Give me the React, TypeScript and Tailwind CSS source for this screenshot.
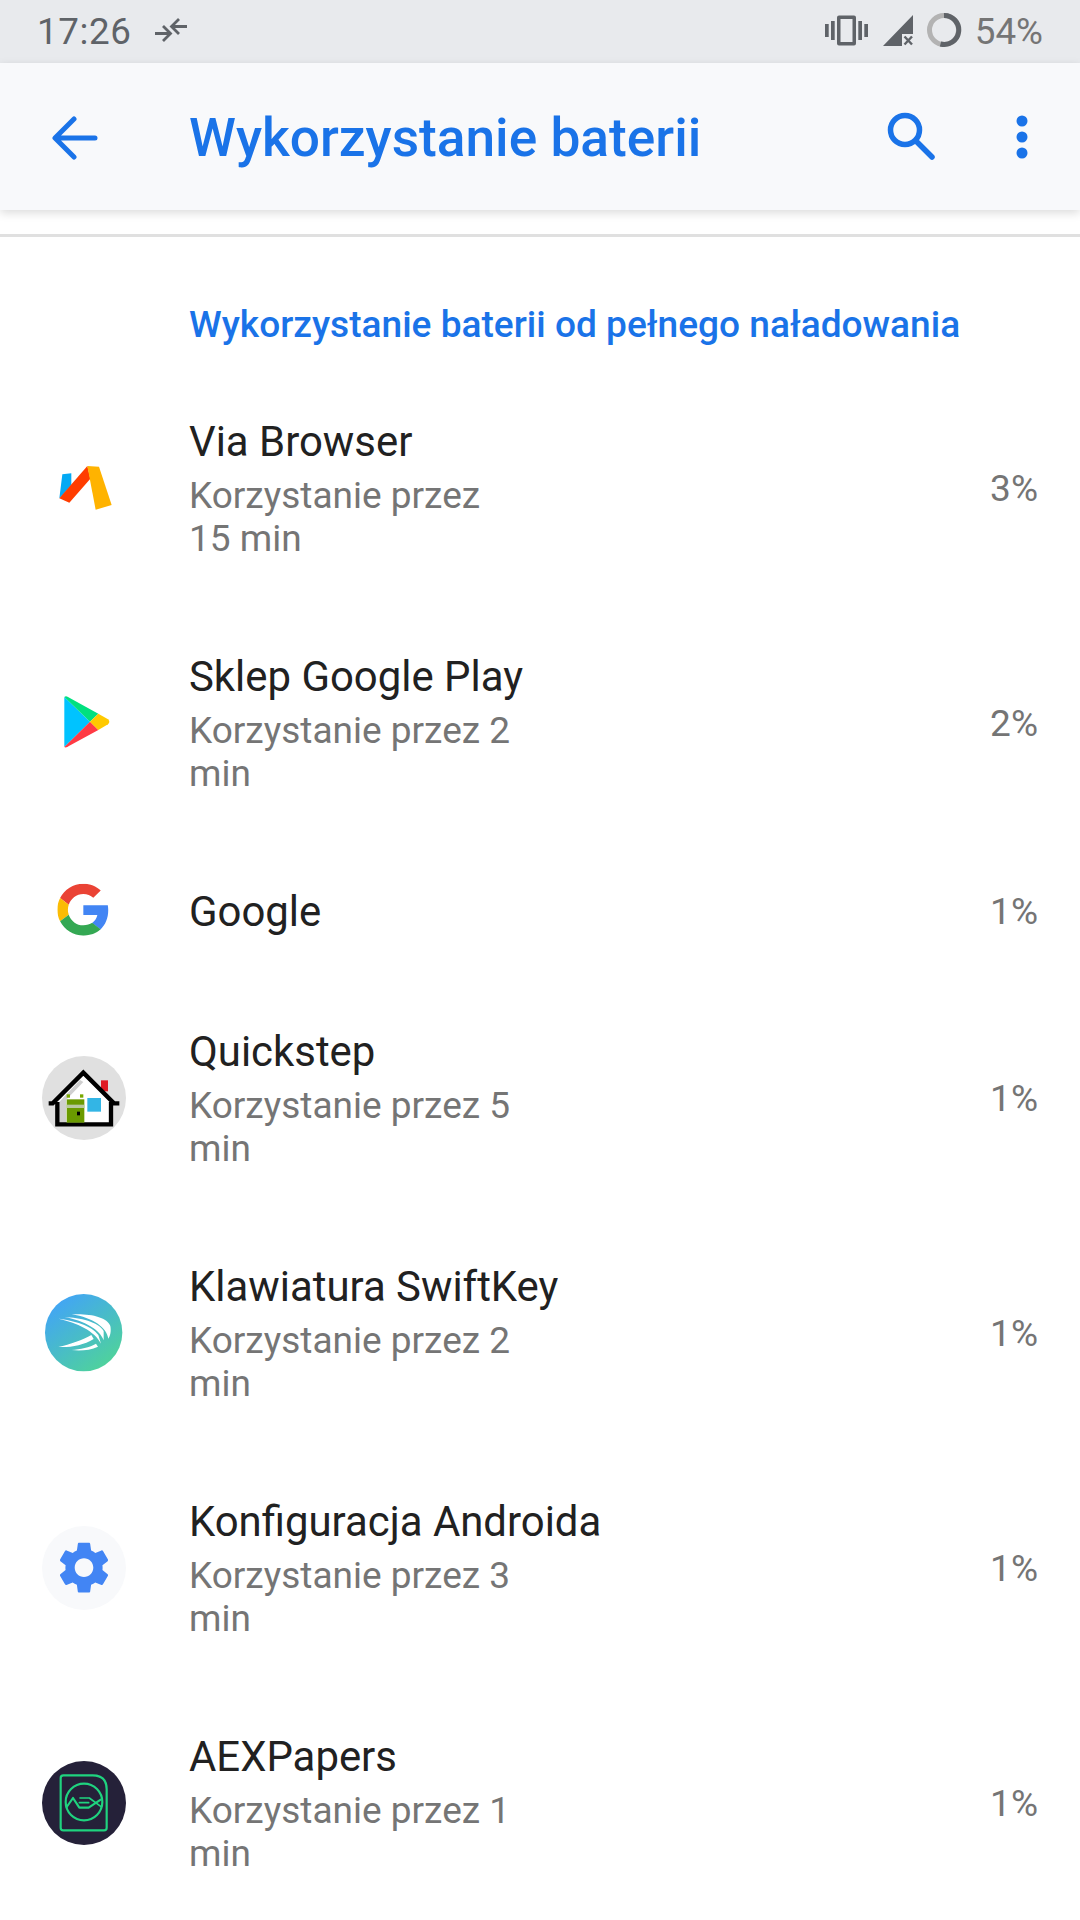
const ROWS = [
  { name: "Via Browser", sub: "Korzystanie przez 15 min", pct: "3%", icon: "via" },
  { name: "Sklep Google Play", sub: "Korzystanie przez 2 min", pct: "2%", icon: "play" },
  { name: "Google", sub: "", pct: "1%", icon: "google" },
  { name: "Quickstep", sub: "Korzystanie przez 5 min", pct: "1%", icon: "house" },
  { name: "Klawiatura SwiftKey", sub: "Korzystanie przez 2 min", pct: "1%", icon: "swift" },
  { name: "Konfiguracja Androida", sub: "Korzystanie przez 3 min", pct: "1%", icon: "gear" },
  { name: "AEXPapers", sub: "Korzystanie przez 1 min", pct: "1%", icon: "aex" },
];

// coordinates below are 3 units per screen pixel
function AppIcon({ icon }: { icon: string }) {
  if (icon === "via") {
    return (
      <svg viewBox="36 15 252 252" className="w-[84px] h-[84px]">
        <path d="M97 100 L124 97 L124 132 L100 160 L88 172 Z" fill="#03a9f4" />
        <path d="M172 75 L181 113 L118 185 L88 172 Z" fill="#ff3d00" />
        <path d="M172 75 L207 77 L245 192 L197 206 Z" fill="#ffb300" />
      </svg>
    );
  }
  if (icon === "play") {
    return (
      <svg viewBox="36 30 252 252" className="w-[84px] h-[84px]">
        <path d="M103 78 L180 152 L103 228 Z" fill="#00c3ff" />
        <path d="M103 78 Q108 72 118 80 L205 128 L180 152 Z" fill="#00e07f" />
        <path d="M103 228 Q108 232 118 224 L205 177 L180 152 Z" fill="#ff3a44" />
        <path d="M205 128 L234 145 Q242 152 234 160 L205 177 L180 152 Z" fill="#ffc900" />
      </svg>
    );
  }
  if (icon === "google") {
    return (
      <svg viewBox="36 22 252 252" className="w-[84px] h-[84px]">
        <svg x="82" y="69" width="156" height="156" viewBox="0 0 48 48">
          <path fill="#EA4335" d="M24 9.5c3.54 0 6.71 1.22 9.21 3.6l6.85-6.85C35.9 2.38 30.47 0 24 0 14.62 0 6.51 5.38 2.56 13.22l7.98 6.19C12.43 13.72 17.74 9.5 24 9.5z" />
          <path fill="#4285F4" d="M46.98 24.55c0-1.57-.15-3.09-.38-4.55H24v9.02h12.94c-.58 2.96-2.26 5.48-4.78 7.18l7.73 6c4.51-4.18 7.09-10.36 7.09-17.65z" />
          <path fill="#FBBC05" d="M10.53 28.59c-.5-1.45-.78-2.99-.78-4.59s.27-3.14.78-4.59l-7.98-6.19C.92 16.46 0 20.12 0 24c0 3.88.92 7.54 2.56 10.78l7.97-6.19z" />
          <path fill="#34A853" d="M24 48c6.48 0 11.93-2.13 15.89-5.81l-7.73-6c-2.15 1.45-4.92 2.3-8.16 2.3-6.26 0-11.57-4.22-13.47-9.91l-7.98 6.19C6.51 42.62 14.62 48 24 48z" />
        </svg>
      </svg>
    );
  }
  if (icon === "house") {
    return (
      <svg viewBox="36 30 252 252" className="w-[84px] h-[84px]">
        <circle cx="162" cy="156" r="126" fill="#e0e0e0" />
        <path d="M80 172 L160 82 L243 172 V236 H80 Z" fill="#fff" />
        <path d="M84 172 L150 102 L160 108 L108 162 V232 H84 Z" fill="#cfcfcf" />
        <rect x="213" y="103" width="21" height="33" fill="#e01b24" />
        <path d="M56 172 H68 L160 80 L252 172 H268 M82 168 V235 H243 V168" fill="none" stroke="#000" strokeWidth="13" />
        <rect x="172" y="156" width="41" height="41" fill="#33b5e5" />
        <rect x="110" y="145" width="10" height="10" fill="#78a800" />
        <rect x="150" y="145" width="10" height="10" fill="#78a800" />
        <rect x="110" y="160" width="53" height="70" fill="#6a9a00" />
        <rect x="110" y="176" width="53" height="10" fill="#b8c8a0" />
        <rect x="141" y="197" width="9" height="11" fill="#000" />
      </svg>
    );
  }
  if (icon === "swift") {
    return (
      <svg viewBox="36 30 252 252" className="w-[84px] h-[84px]">
        <defs>
          <linearGradient id="swiftGrad" x1="0.15" y1="0.1" x2="0.8" y2="0.95">
            <stop offset="0" stopColor="#42a5f5" />
            <stop offset="1" stopColor="#4fd39a" />
          </linearGradient>
        </defs>
        <circle cx="161" cy="155" r="116" fill="url(#swiftGrad)" />
        <path d="M125 100 C180 97 232 108 241 135 C244 150 241 165 235 173 C230 140 190 110 125 100 Z" fill="#fff" />
        <path d="M104 108 C150 110 205 122 221 150 L221 178 C210 146 165 120 104 108 Z" fill="#fff" />
        <path d="M85 113 C130 118 186 134 205 162 L213 188 C195 150 140 125 85 113 Z" fill="#fff" />
        <path d="M85 198 C120 190 160 177 184 162 L191 174 C160 193 120 200 85 198 Z" fill="#fff" />
        <path d="M125 207 C150 205 180 199 198 188 L204 197 C180 208 150 210 125 207 Z" fill="#fff" />
      </svg>
    );
  }
  if (icon === "gear") {
    return (
      <svg viewBox="36 30 252 252" className="w-[84px] h-[84px]">
        <circle cx="162" cy="156" r="126" fill="#f8f9fb" />
        <svg x="69" y="62" width="186" height="186" viewBox="0 0 24 24">
          <path
            fill="#4285f4"
            fillRule="evenodd"
            d="M19.14 12.94c.04-.3.06-.61.06-.94 0-.32-.02-.64-.07-.94l2.03-1.58c.18-.14.23-.41.12-.61l-1.92-3.32c-.12-.22-.37-.29-.59-.22l-2.39.96c-.5-.38-1.03-.7-1.62-.94l-.36-2.54c-.04-.24-.24-.41-.48-.41h-3.84c-.24 0-.43.17-.47.41l-.36 2.54c-.59.24-1.13.57-1.62.94l-2.39-.96c-.22-.08-.47 0-.59.22L2.74 8.87c-.12.21-.08.47.12.61l2.03 1.58c-.05.3-.09.63-.09.94s.02.64.07.94l-2.03 1.58c-.18.14-.23.41-.12.61l1.92 3.32c.12.22.37.29.59.22l2.39-.96c.5.38 1.03.7 1.62.94l.36 2.54c.05.24.24.41.48.41h3.84c.24 0 .44-.17.47-.41l.36-2.54c.59-.24 1.13-.56 1.62-.94l2.39.96c.22.08.47 0 .59-.22l1.92-3.32c.12-.22.07-.47-.12-.61l-2.01-1.58zM12 15.6c-1.98 0-3.6-1.62-3.6-3.6s1.62-3.6 3.6-3.6 3.6 1.62 3.6 3.6-1.62 3.6-3.6 3.6z"
          />
        </svg>
      </svg>
    );
  }
  return (
    <svg viewBox="36 30 252 252" className="w-[84px] h-[84px]">
      <circle cx="162" cy="156" r="126" fill="#252139" />
      <g fill="none" stroke="#1fd37f" strokeWidth="6.5" strokeLinejoin="round" strokeLinecap="round">
        <path d="M100 73 H188 Q230 73 230 115 V230 Q230 238 222 238 H100 Q92 238 92 230 V81 Q92 73 100 73 Z" />
        <circle cx="162" cy="153" r="55" />
        <path d="M110 168 L129 141 L148 170 H176 L212 146" />
        <path d="M148 155 H176 M150 141 H178 L212 166" strokeWidth="5" />
      </g>
    </svg>
  );
}

export default function App() {
  return (
    <div className="w-[1080px] h-[1920px] bg-white overflow-hidden font-['Roboto',sans-serif]">
      {/* Status bar */}
      <div className="h-[63px] bg-[#e8eaed] flex items-center pl-[37px] pr-[37px]">
        <span className="text-[36.75px] leading-[63px] text-[#5f6368] tracking-[0.6px]">17:26</span>
        <svg viewBox="0 0 34 27" className="w-[34px] h-[27px] ml-[22px] mt-[-3px]" fill="none" stroke="#5f6368" strokeWidth="2.8">
          <path d="M1 16.5 H16 M9 9 L16.5 16.5 L9 24" />
          <path d="M33 9.5 H18 M25 2 L17.5 9.5 L25 17" />
        </svg>
        <div className="ml-auto flex items-center">
          <svg viewBox="0 0 43 31" className="w-[43px] h-[31px] mt-[-2px]" fill="#5f6368">
            <rect x="0" y="9" width="3.7" height="13" />
            <rect x="6" y="6" width="3.7" height="19" />
            <path fillRule="evenodd" d="M14 0.5 H29 Q31 0.5 31 2.5 V28.5 Q31 30.5 29 30.5 H14 Q12 30.5 12 28.5 V2.5 Q12 0.5 14 0.5 Z M15.5 4 V27 H27.5 V4 Z" />
            <rect x="33.3" y="6" width="3.7" height="19" />
            <rect x="39.3" y="9" width="3.7" height="13" />
          </svg>
          <svg viewBox="0 0 32 32" className="w-[32px] h-[32px] ml-[14px] mt-[-1px]" fill="#5f6368">
            <path d="M1 31 L31 0 V19 H20 V31 Z" />
            <path d="M22.5 21.5 L30 29.5 M30 21.5 L22.5 29.5" stroke="#5f6368" strokeWidth="2.4" fill="none" />
          </svg>
          <svg viewBox="0 0 36 36" className="w-[36px] h-[36px] ml-[12px] mt-[-3px]" fill="none" strokeWidth="5">
            <circle cx="18" cy="18" r="14.5" stroke="#b3b3b3" />
            <path d="M18 3.5 A14.5 14.5 0 1 1 14.5 32" stroke="#5f6368" />
          </svg>
          <span className="text-[36.75px] leading-[63px] text-[#757575] ml-[13px]">54%</span>
        </div>
      </div>

      {/* Toolbar */}
      <div className="relative h-[147px] bg-[#f8f9fb] flex items-center shadow-[0_3px_9px_rgba(0,0,0,0.14)]">
        <svg viewBox="0 0 48 48" className="w-[48px] h-[48px] ml-[52px]" fill="none" stroke="#1a73e8" strokeWidth="5" strokeLinecap="round" strokeLinejoin="round">
          <path d="M43 25 H4 M22 6 L3 25 L22 44" />
        </svg>
        <h1 className="ml-[89px] mt-[2px] text-[53.25px] leading-[70px] font-medium text-[#1a73e8]">Wykorzystanie baterii</h1>
        <svg viewBox="0 0 50 50" className="w-[50px] h-[50px] ml-auto mt-[-2px]" fill="none" stroke="#1a73e8" strokeWidth="5.5" strokeLinecap="round">
          <circle cx="19" cy="19" r="14.5" />
          <path d="M30 30 L46 46" />
        </svg>
        <svg viewBox="0 0 12 44" className="w-[12px] h-[44px] ml-[80px] mr-[52px]" fill="#1a73e8">
          <circle cx="6" cy="6" r="5.5" />
          <circle cx="6" cy="22" r="5.5" />
          <circle cx="6" cy="38" r="5.5" />
        </svg>
      </div>

      <div className="mt-[24px] h-[3px] bg-[#e0e0e0]" />

      {/* Battery list */}
      <div className="h-[133px] pl-[189px] pt-[63px]">
        <h2 className="text-[37.1px] leading-[50px] font-medium text-[#1a73e8]">Wykorzystanie baterii od pełnego naładowania</h2>
      </div>
      {ROWS.map((row) => (
        <div key={row.name} className={`flex items-center pl-[42px] pr-[42px] ${row.sub ? "h-[235px]" : "h-[140px]"}`}>
          <AppIcon icon={row.icon} />
          <div className={`ml-[63px] flex-1 ${row.sub ? "mb-[6px]" : "mt-[3px]"}`}>
            <div className="text-[41.9px] leading-[65px] text-[#212121]">{row.name}</div>
            {row.sub && <div className="w-[330px] text-[37px] leading-[43px] text-[#757575]">{row.sub}</div>}
          </div>
          <div className="mt-[3px] text-[37px] leading-[50px] text-[#757575]">{row.pct}</div>
        </div>
      ))}
    </div>
  );
}
